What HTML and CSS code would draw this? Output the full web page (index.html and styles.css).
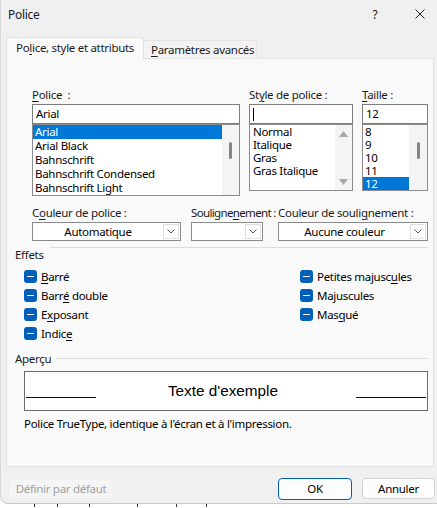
FILE: index.html
```html
<!DOCTYPE html>
<html lang="fr">
<head>
<meta charset="utf-8">
<title>Police</title>
<link rel="stylesheet" href="styles.css">
</head>
<body>
<div class="dialog">
  <div class="titlebar">
    <span class="title">Police</span>
    <span class="help">?</span>
    <svg class="close" width="10" height="10" viewBox="0 0 10 10"><path d="M0.5 0.5L9.5 9.5M9.5 0.5L0.5 9.5" stroke="#1b1b1b" stroke-width="1" fill="none"/></svg>
  </div>
  <div class="tabs">
    <div class="tab tab-active">Po<u>l</u>ice, style et attributs</div>
    <div class="tab tab-idle"><u>P</u>aramètres avancés</div>
  </div>
  <div class="panel">
    <div class="fontgrid">
      <div class="field">
        <div class="lbl"><u>P</u>olice&nbsp; :</div>
        <div class="input">Arial</div>
        <div class="list list-font">
          <div class="items items-font">
            <div class="item item-sel">Arial</div>
            <div class="item">Arial Black</div>
            <div class="item">Bahnschrift</div>
            <div class="item">Bahnschrift Condensed</div>
            <div class="item">Bahnschrift Light</div>
          </div>
          <div class="vscroll vscroll-thumb"><span class="thumb"></span></div>
        </div>
      </div>
      <div class="field">
        <div class="lbl">St<u>y</u>le de police :</div>
        <div class="input"><span class="caret"></span></div>
        <div class="list list-small">
          <div class="items items-style">
            <div class="item">Normal</div>
            <div class="item">Italique</div>
            <div class="item">Gras</div>
            <div class="item">Gras Italique</div>
          </div>
          <div class="vscroll vscroll-arrows">
            <svg width="9" height="6" viewBox="0 0 9 6"><polygon points="4.5,0 9,6 0,6" fill="#a9a9a9"/></svg>
            <svg width="9" height="6" viewBox="0 0 9 6"><polygon points="0,0 9,0 4.5,6" fill="#a9a9a9"/></svg>
          </div>
        </div>
      </div>
      <div class="field">
        <div class="lbl"><u>T</u>aille :</div>
        <div class="input">12</div>
        <div class="list list-small">
          <div class="items items-size">
            <div class="item">8</div>
            <div class="item">9</div>
            <div class="item">10</div>
            <div class="item">11</div>
            <div class="item item-sel">12</div>
          </div>
          <div class="vscroll vscroll-thumb"><span class="thumb"></span></div>
        </div>
      </div>
    </div>

    <div class="selgrid">
      <div class="field">
        <div class="lbl">C<u>o</u>uleur de police :</div>
        <div class="select select-color">
          <span class="sel-text">Automatique</span>
          <span class="sel-arrow"><svg width="8" height="5" viewBox="0 0 8 5"><polyline points="0.5,0.5 4,4 7.5,0.5" fill="none" stroke="#5a5a5a" stroke-width="1"/></svg></span>
        </div>
      </div>
      <div class="field">
        <div class="lbl lbl-tight">Souligne<u>n</u>ement :</div>
        <div class="select select-under">
          <span class="sel-text"></span>
          <span class="sel-arrow"><svg width="8" height="5" viewBox="0 0 8 5"><polyline points="0.5,0.5 4,4 7.5,0.5" fill="none" stroke="#5a5a5a" stroke-width="1"/></svg></span>
        </div>
      </div>
      <div class="field">
        <div class="lbl">Couleur de souli<u>g</u>nement :</div>
        <div class="select">
          <span class="sel-text">Aucune couleur</span>
          <span class="sel-arrow"><svg width="8" height="5" viewBox="0 0 8 5"><polyline points="0.5,0.5 4,4 7.5,0.5" fill="none" stroke="#5a5a5a" stroke-width="1"/></svg></span>
        </div>
      </div>
    </div>

    <div class="group group-effets">
      <span class="group-title">Effets</span>
      <span class="group-line"></span>
    </div>
    <div class="effects">
      <div class="check"><span class="box"></span><span><u>B</u>arré</span></div>
      <div class="check"><span class="box"></span><span>Petites majusc<u>u</u>les</span></div>
      <div class="check"><span class="box"></span><span>Barr<u>é</u> double</span></div>
      <div class="check"><span class="box"></span><span>Ma<u>j</u>uscules</span></div>
      <div class="check"><span class="box"></span><span>E<u>x</u>posant</span></div>
      <div class="check"><span class="box"></span><span>Mas<u>q</u>ué</span></div>
      <div class="check"><span class="box"></span><span>Indic<u>e</u></span></div>
    </div>

    <div class="group group-apercu">
      <span class="group-title">Aperçu</span>
      <span class="group-line"></span>
    </div>
    <div class="preview">
      <span class="pv-line"></span>
      <span class="pv-text">Texte d'exemple</span>
      <span class="pv-line"></span>
    </div>
    <div class="desc">Police TrueType, identique à l'écran et à l'impression.</div>
  </div>

  <div class="footer">
    <div class="btn btn-disabled">Définir par défaut</div>
    <div class="btn btn-ok">OK</div>
    <div class="btn btn-cancel">Annuler</div>
  </div>
</div>
<div class="behind">
  <span class="mark m1"></span><span class="mark m2"></span><span class="mark m3"></span><span class="mark m4"></span><span class="mark m5"></span><span class="mark m6"></span>
</div>
</body>
</html>
```

FILE: styles.css
```css
* { box-sizing: border-box; }
html, body { margin: 0; padding: 0; }
body {
  width: 437px;
  height: 508px;
  overflow: hidden;
  background: #ffffff;
  font-family: "Noto Sans", "Open Sans", sans-serif;
  font-size: 11.5px;
  letter-spacing: -0.3px;
  color: #1a1a1a;
}
u { text-decoration: underline; text-underline-offset: 2px; text-decoration-thickness: 1px; }

.dialog {
  width: 437px;
  height: 504px;
  background: #f0f0f0;
  border-bottom: 1px solid #c9c9c9;
  border-bottom-left-radius: 8px;
  box-shadow: inset 1px 0 0 #d9d9d9;
  display: flex;
  flex-direction: column;
}

/* title bar */
.titlebar {
  height: 28px;
  display: flex;
  align-items: center;
  padding-left: 8px;
}
.title { font-size: 12px; color: #1a1a1a; }
.help { margin-left: auto; width: 10px; text-align: center; font-size: 12px; }
.close { margin-left: 35px; margin-right: 12px; }

/* tabs */
.tabs {
  display: flex;
  align-items: flex-end;
  margin: 9px 0 0 6px;
  height: 21px;
  position: relative;
  z-index: 1;
}
.tab { line-height: 16px; white-space: nowrap; }
.tab-active {
  width: 138px;
  height: 22px;
  margin-bottom: -1px;
  background: #f9f9f9;
  border: 1px solid #e2e2e2;
  border-bottom: none;
  border-radius: 3px 3px 0 0;
  padding: 2px 0 0 9px;
}
.tab-idle {
  width: 113px;
  height: 18px;
  background: #f3f3f3;
  border-top: 1px solid #e4e4e4;
  border-right: 1px solid #e4e4e4;
  padding: 1px 0 0 7px;
}

/* panel */
.panel {
  margin-left: 6px;
  width: 428px;
  height: 409px;
  background: #f9f9f9;
  border: 1px solid #e3e3e3;
  padding: 28px 5px 0 8px;
}
.lbl { height: 16px; line-height: 16px; white-space: nowrap; }
.lbl-tight { letter-spacing: -0.65px; }

.fontgrid {
  display: grid;
  grid-template-columns: 208px 104px 66px;
  column-gap: 9px;
  margin-left: 17px;
  align-items: start;
}
.input {
  margin-top: 1px;
  height: 20px;
  border: 1px solid #7d7d7d;
  background: #fff;
  padding-left: 3px;
  line-height: 18px;
  color: #000;
  display: flex;
  align-items: center;
}
.caret { display: block; width: 1px; height: 13px; background: #000; margin-left: 0; }

.list {
  border: 1px solid #8c8c8c;
  background: #fff;
  display: flex;
  color: #000;
}
.list-font { height: 72px; }
.list-small { height: 67px; }
.items { overflow: hidden; }
.items-font { width: 189px; }
.items-font .item { height: 14px; line-height: 14px; }
.items-style { width: 85px; }
.items-size { width: 46px; }
.items-style .item, .items-size .item { height: 13px; line-height: 13px; }
.item { padding-left: 2px; white-space: nowrap; }
.items-style .item { padding-left: 3px; }
.item-sel { background: #0078d7; color: #fff; }

.vscroll { flex: 1; background: #f4f4f4; }
.vscroll-thumb { display: flex; justify-content: center; padding-top: 17px; }
.thumb { display: block; width: 3px; height: 17px; border-radius: 2px; background: #858585; }
.vscroll-arrows {
  display: flex;
  flex-direction: column;
  align-items: center;
  justify-content: space-between;
  padding: 6px 0 5px;
}

/* selects */
.selgrid {
  display: grid;
  grid-template-columns: 149px 77px 150px;
  column-gap: 10px;
  margin: 9px 0 0 17px;
}
.select {
  margin-top: 1px;
  height: 19px;
  border: 1px solid #8a8a8a;
  background: #fff;
  display: flex;
  color: #000;
}
.select-under { width: 72px; }
.sel-text { flex: 1; text-align: center; line-height: 17px; }
.sel-arrow {
  width: 16px;
  margin: 1px 1px 1px 0;
  border: 1px solid #e0e0e0;
  display: flex;
  align-items: center;
  justify-content: center;
}

/* group headers */
.group { display: flex; align-items: flex-start; height: 16px; }
.group-title { line-height: 16px; }
.group-line { flex: 1; height: 1px; background: #dcdcdc; }
.group-effets { margin-top: 5px; }
.group-effets .group-title { margin-top: 1px; }
.group-effets .group-line { margin: 1px 0 0 6px; }
.group-apercu { margin-top: 8px; }
.group-apercu .group-line { margin: 7px 0 0 5px; }

/* effects */
.effects {
  display: grid;
  grid-template-columns: 276px auto;
  grid-auto-rows: 19px;
  margin: 5px 0 0 9px;
}
.check { display: flex; align-items: center; gap: 4px; white-space: nowrap; color: #000; }
.box {
  width: 13px;
  height: 13px;
  border-radius: 3px;
  background: #005fb8;
  display: flex;
  align-items: center;
  justify-content: center;
}
.box::before { content: ""; display: block; width: 7px; height: 1.6px; background: #fff; border-radius: 1px; }

/* preview */
.preview {
  margin: 4px 0 0 9px;
  height: 40px;
  border: 1px solid #6b6b6b;
  background: #fff;
  display: flex;
  align-items: flex-start;
  padding: 0 1px;
}
.pv-line { width: 70px; height: 1px; background: #111; margin-top: 25px; }
.pv-text {
  flex: 1;
  text-align: center;
  padding-right: 6px;
  font-family: "Liberation Sans", Arial, sans-serif;
  font-size: 15.3px;
  letter-spacing: 0;
  line-height: 18px;
  margin-top: 10px;
  color: #000;
}
.desc { margin: 5px 0 0 9px; line-height: 16px; color: #000; }

/* footer */
.footer {
  display: flex;
  align-items: flex-start;
  margin-top: 11px;
  padding: 0 2px 0 8px;
}
.btn {
  border-radius: 4px;
  text-align: center;
  white-space: nowrap;
}
.btn-disabled {
  margin-top: 1px;
  width: 106px;
  height: 20px;
  line-height: 18px;
  background: #f5f5f5;
  border: 1px solid #ececec;
  color: #a0a0a0;
}
.btn-ok {
  margin-left: auto;
  width: 74px;
  height: 22px;
  line-height: 20px;
  background: #fdfdfd;
  border: 1px solid #005fb8;
  color: #000;
}
.btn-cancel {
  margin-left: 10px;
  width: 73px;
  height: 21px;
  line-height: 19px;
  background: #fdfdfd;
  border: 1px solid #d3d3d3;
  color: #000;
}

/* document behind the dialog */
.behind { height: 4px; display: flex; align-items: flex-start; padding-left: 30px; gap: 0; }
.mark { display: block; width: 1px; height: 3px; background: #333; }
.m1 { margin-left: 4px; }
.m2 { margin-left: 22px; }
.m3 { margin-left: 31px; }
.m4 { margin-left: 47px; }
.m5 { margin-left: 38px; }
.m6 { margin-left: 29px; }
```
